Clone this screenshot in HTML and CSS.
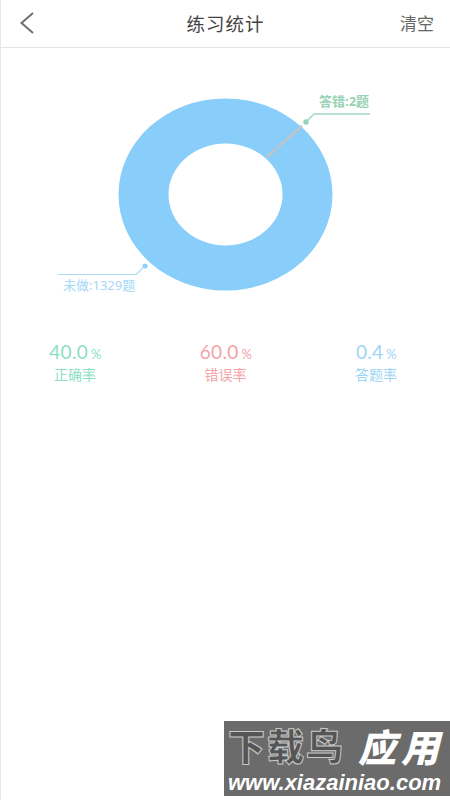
FILE: index.html
```html
<!DOCTYPE html>
<html lang="zh">
<head>
<meta charset="utf-8">
<title>练习统计</title>
<link rel="stylesheet" href="styles.css">
</head>
<body>
<div class="page">
  <header class="nav">
    <svg class="back" width="16" height="24" viewBox="0 0 16 24"><path d="M14 2 L2.500 12 L14 22" fill="none" stroke="#6f6f6f" stroke-width="2"/></svg>
    <h1 class="title">练习统计</h1>
    <span class="clear">清空</span>
  </header>
  <svg class="chart" width="449" height="290" viewBox="0 0 449 290">
    <g transform="translate(-1 -48)">
      <path fill-rule="evenodd" fill="#89cefb" d="M118.5 194.5a107 96 0 1 0 214 0a107 96 0 1 0 -214 0Z M168.5 194.5a57 51 0 1 0 114 0a57 51 0 1 0 -114 0Z"/>
      <line x1="267" y1="157" x2="302" y2="126" stroke="#bcc5c9" stroke-width="2.4"/>
      <circle cx="306" cy="122" r="2.7" fill="#8fd3b4"/>
      <path d="M306 122 L314 114 H370" fill="none" stroke="#a5d8c0" stroke-width="1.6"/>
      <text class="label label-green" x="319" y="106">答错:2题</text>
      <circle cx="145" cy="266" r="2.5" fill="#89cefb"/>
      <path d="M145 266 L136 274.500 H58" fill="none" stroke="#a8dcf9" stroke-width="1.2"/>
      <text class="label label-blue" x="63" y="290">未做:1329题</text>
    </g>
  </svg>
  <section class="stats">
    <div class="stat green"><div class="val">40.0<small>%</small></div><div class="cap">正确率</div></div>
    <div class="stat red"><div class="val">60.0<small>%</small></div><div class="cap">错误率</div></div>
    <div class="stat blue"><div class="val">0.4<small>%</small></div><div class="cap">答题率</div></div>
  </section>
  <aside class="mark">
    <div class="mark-top"><span class="mark-a">下载鸟</span><span class="mark-b">应用</span></div>
    <div class="mark-url">www.xiazainiao.com</div>
  </aside>
</div>
</body>
</html>
```
FILE: styles.css
```css
* { box-sizing: border-box; margin: 0; padding: 0; }
html, body { width: 450px; height: 800px; overflow: hidden; background: #fff; }
body { font-family: "Noto Sans CJK SC", "Noto Sans", sans-serif; }
.page { position: relative; width: 450px; height: 800px; border-left: 1px solid #e6e6e6; overflow: hidden; }
.nav { height: 48px; border-bottom: 1px solid #e5e5e5; display: flex; align-items: center; justify-content: space-between; padding: 0 16px 2px 18px; position: relative; }
.back { display: block; }
.title { position: absolute; left: 0; right: 0; top: 9px; text-align: center; font-size: 18.500px; line-height: 28px; font-weight: 400; color: #444; letter-spacing: 1px; }
.clear { font-size: 17px; color: #666; }
.chart { display: block; }
.label { font-family: "Noto Sans", "Noto Sans CJK SC", sans-serif; font-size: 13px; }
.label-green { fill: #97d2b5; font-weight: 700; }
.label-blue { fill: #a5d9f7; }
.stats { display: flex; justify-content: space-between; padding: 2px 26px 0 26px; }
.stat { width: 96px; text-align: center; }
.val { font-family: "Lato", sans-serif; font-size: 19px; line-height: 24px; letter-spacing: .3px; padding-left: 1px; }
.val small { font-size: 13px; margin-left: 3px; }
.cap { font-size: 14px; line-height: 20px; margin-top: -2px; }
.green { color: #8cdfc3; }
.red { color: #f2a3a8; }
.blue { color: #9dd5f4; }
.mark { position: absolute; left: 223px; top: 721px; width: 226px; height: 75px; background: #6b6b6b; padding: 8px 4px 0; }
.mark-top { display: flex; align-items: center; height: 40px; font-family: "Liberation Sans", "Noto Sans CJK SC", sans-serif; font-size: 37px; font-weight: 900; line-height: 40px; white-space: nowrap; }
.mark-a { color: #555; -webkit-text-stroke: 1px #c9c9c9; letter-spacing: 2px; }
.mark-b { color: #fff; font-style: italic; letter-spacing: 5px; margin-left: 13px; font-size: 38px; }
.mark-url { font-family: "Liberation Sans", sans-serif; font-size: 22px; font-weight: 700; font-style: italic; color: #fff; line-height: 24px; margin-top: 2px; white-space: nowrap; }
```
